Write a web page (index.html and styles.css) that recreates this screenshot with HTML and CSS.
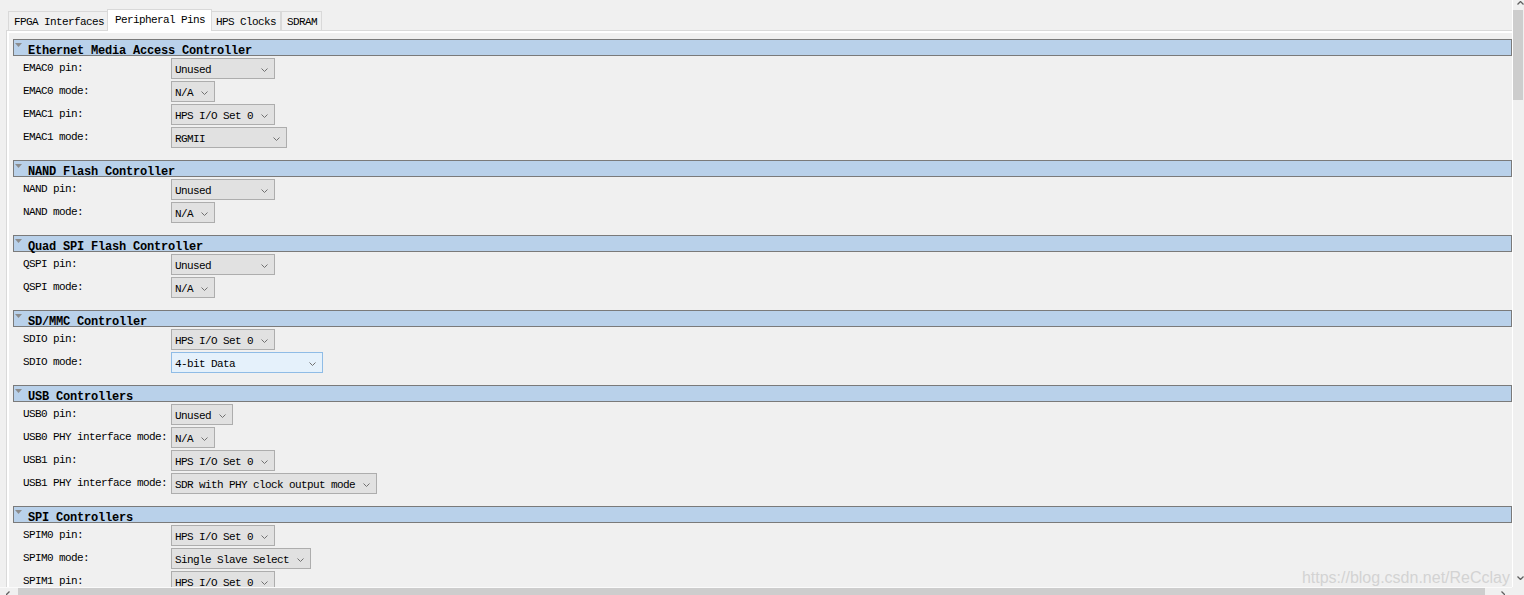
FILE: index.html
```html
<!DOCTYPE html>
<html lang="en">
<head>
    <meta charset="UTF-8">
    <title>HPS Peripheral Pins</title>
    <link rel="stylesheet" href="styles.css">
</head>
<body>

<div class="window">
    <div class="main">
        <div class="tabs">
            <div class="tab">FPGA Interfaces</div>
            <div class="tab active">Peripheral Pins</div>
            <div class="tab">HPS Clocks</div>
            <div class="tab">SDRAM</div>
        </div>

        <div class="panel">
            <div class="scroller">

                <div class="group">
                    <div class="group-head">
                        <svg class="caret" width="7" height="4" viewBox="0 0 7 4"><polygon points="0,0 7,0 3.5,4"/></svg>
                        <span class="title">Ethernet Media Access Controller</span>
                    </div>
                    <div class="fields">
                        <label>EMAC0 pin:</label>
                        <div class="combo w104"><span>Unused</span><svg class="chev" width="7" height="4" viewBox="0 0 7 4"><polyline points="0.5,0.5 3.5,3.5 6.5,0.5"/></svg></div>
                        <label>EMAC0 mode:</label>
                        <div class="combo w44"><span>N/A</span><svg class="chev" width="7" height="4" viewBox="0 0 7 4"><polyline points="0.5,0.5 3.5,3.5 6.5,0.5"/></svg></div>
                        <label>EMAC1 pin:</label>
                        <div class="combo w104"><span>HPS I/O Set 0</span><svg class="chev" width="7" height="4" viewBox="0 0 7 4"><polyline points="0.5,0.5 3.5,3.5 6.5,0.5"/></svg></div>
                        <label>EMAC1 mode:</label>
                        <div class="combo w116"><span>RGMII</span><svg class="chev" width="7" height="4" viewBox="0 0 7 4"><polyline points="0.5,0.5 3.5,3.5 6.5,0.5"/></svg></div>
                    </div>
                </div>

                <div class="group">
                    <div class="group-head">
                        <svg class="caret" width="7" height="4" viewBox="0 0 7 4"><polygon points="0,0 7,0 3.5,4"/></svg>
                        <span class="title">NAND Flash Controller</span>
                    </div>
                    <div class="fields">
                        <label>NAND pin:</label>
                        <div class="combo w104"><span>Unused</span><svg class="chev" width="7" height="4" viewBox="0 0 7 4"><polyline points="0.5,0.5 3.5,3.5 6.5,0.5"/></svg></div>
                        <label>NAND mode:</label>
                        <div class="combo w44"><span>N/A</span><svg class="chev" width="7" height="4" viewBox="0 0 7 4"><polyline points="0.5,0.5 3.5,3.5 6.5,0.5"/></svg></div>
                    </div>
                </div>

                <div class="group">
                    <div class="group-head">
                        <svg class="caret" width="7" height="4" viewBox="0 0 7 4"><polygon points="0,0 7,0 3.5,4"/></svg>
                        <span class="title">Quad SPI Flash Controller</span>
                    </div>
                    <div class="fields">
                        <label>QSPI pin:</label>
                        <div class="combo w104"><span>Unused</span><svg class="chev" width="7" height="4" viewBox="0 0 7 4"><polyline points="0.5,0.5 3.5,3.5 6.5,0.5"/></svg></div>
                        <label>QSPI mode:</label>
                        <div class="combo w44"><span>N/A</span><svg class="chev" width="7" height="4" viewBox="0 0 7 4"><polyline points="0.5,0.5 3.5,3.5 6.5,0.5"/></svg></div>
                    </div>
                </div>

                <div class="group">
                    <div class="group-head">
                        <svg class="caret" width="7" height="4" viewBox="0 0 7 4"><polygon points="0,0 7,0 3.5,4"/></svg>
                        <span class="title">SD/MMC Controller</span>
                    </div>
                    <div class="fields">
                        <label>SDIO pin:</label>
                        <div class="combo w104"><span>HPS I/O Set 0</span><svg class="chev" width="7" height="4" viewBox="0 0 7 4"><polyline points="0.5,0.5 3.5,3.5 6.5,0.5"/></svg></div>
                        <label>SDIO mode:</label>
                        <div class="combo w152 hover"><span>4-bit Data</span><svg class="chev" width="7" height="4" viewBox="0 0 7 4"><polyline points="0.5,0.5 3.5,3.5 6.5,0.5"/></svg></div>
                    </div>
                </div>

                <div class="group">
                    <div class="group-head">
                        <svg class="caret" width="7" height="4" viewBox="0 0 7 4"><polygon points="0,0 7,0 3.5,4"/></svg>
                        <span class="title">USB Controllers</span>
                    </div>
                    <div class="fields">
                        <label>USB0 pin:</label>
                        <div class="combo w62"><span>Unused</span><svg class="chev" width="7" height="4" viewBox="0 0 7 4"><polyline points="0.5,0.5 3.5,3.5 6.5,0.5"/></svg></div>
                        <label>USB0 PHY interface mode:</label>
                        <div class="combo w44"><span>N/A</span><svg class="chev" width="7" height="4" viewBox="0 0 7 4"><polyline points="0.5,0.5 3.5,3.5 6.5,0.5"/></svg></div>
                        <label>USB1 pin:</label>
                        <div class="combo w104"><span>HPS I/O Set 0</span><svg class="chev" width="7" height="4" viewBox="0 0 7 4"><polyline points="0.5,0.5 3.5,3.5 6.5,0.5"/></svg></div>
                        <label>USB1 PHY interface mode:</label>
                        <div class="combo w206"><span>SDR with PHY clock output mode</span><svg class="chev" width="7" height="4" viewBox="0 0 7 4"><polyline points="0.5,0.5 3.5,3.5 6.5,0.5"/></svg></div>
                    </div>
                </div>

                <div class="group">
                    <div class="group-head">
                        <svg class="caret" width="7" height="4" viewBox="0 0 7 4"><polygon points="0,0 7,0 3.5,4"/></svg>
                        <span class="title">SPI Controllers</span>
                    </div>
                    <div class="fields">
                        <label>SPIM0 pin:</label>
                        <div class="combo w104"><span>HPS I/O Set 0</span><svg class="chev" width="7" height="4" viewBox="0 0 7 4"><polyline points="0.5,0.5 3.5,3.5 6.5,0.5"/></svg></div>
                        <label>SPIM0 mode:</label>
                        <div class="combo w140"><span>Single Slave Select</span><svg class="chev" width="7" height="4" viewBox="0 0 7 4"><polyline points="0.5,0.5 3.5,3.5 6.5,0.5"/></svg></div>
                        <label>SPIM1 pin:</label>
                        <div class="combo w104"><span>HPS I/O Set 0</span><svg class="chev" width="7" height="4" viewBox="0 0 7 4"><polyline points="0.5,0.5 3.5,3.5 6.5,0.5"/></svg></div>
                    </div>
                </div>

            </div>
        </div>
    </div>

    <div class="vscroll">
        <svg class="arrow-up" width="7" height="4" viewBox="0 0 7 4"><polyline points="0.5,3.5 3.5,0.5 6.5,3.5"/></svg>
        <div class="vthumb"></div>
        <svg class="arrow-down" width="7" height="4" viewBox="0 0 7 4"><polyline points="0.5,0.5 3.5,3.5 6.5,0.5"/></svg>
    </div>

    <div class="hscroll">
        <svg class="arrow-left" width="4" height="7" viewBox="0 0 4 7"><polyline points="3.5,0.5 0.5,3.5 3.5,6.5"/></svg>
        <div class="hthumb"></div>
        <svg class="arrow-right" width="4" height="7" viewBox="0 0 4 7"><polyline points="0.5,0.5 3.5,3.5 0.5,6.5"/></svg>
    </div>
    <div class="corner"></div>

    <div class="watermark">https://blog.csdn.net/ReCclay</div>
</div>

</body>
</html>
```

FILE: styles.css
```css
body {
    margin: 0;
    background-color: #f0f0f0;
    color: #000;
    font-family: "Liberation Mono", monospace;
    font-size: 11px;
    letter-spacing: -0.6px;
    overflow: hidden;
}
.window {
    position: relative;
    display: grid;
    grid-template-columns: 1512px 12px;
    grid-template-rows: 587px 8px;
    height: 595px;
}
.main {
    overflow: hidden;
}

/* tab strip */
.tabs {
    position: relative;
    z-index: 1;
    display: flex;
    align-items: flex-end;
    height: 22px;
    margin-top: 9px;
    margin-bottom: -1px;
    padding-left: 8px;
}
.tab {
    height: 15px;
    line-height: 15px;
    padding: 3px 4px 0 5px;
    border: 1px solid #d9d9d9;
    background-color: #f0f0f0;
    white-space: nowrap;
}
.tab.active {
    position: relative;
    z-index: 1;
    margin: 0 -2px;
    padding: 3px 6px 3px 7px;
    border-bottom: none;
    background-color: #fff;
}
.panel {
    margin-left: 6px;
    padding: 2px 0 0 2px;
    border-top: 1px solid #d9d9d9;
    border-left: 1px solid #d9d9d9;
    background-color: #fff;
}
.scroller {
    padding: 6px 0 0 4px;
    background-color: #f0f0f0;
}

/* collapsible groups */
.group {
    margin-bottom: 12px;
}
.group-head {
    display: flex;
    align-items: flex-start;
    height: 15px;
    padding-left: 1px;
    border: 1px solid #7a7a7a;
    background-color: #b9d1ea;
}
.caret {
    margin: 3px 6px 0 0;
    fill: #8c8c8c;
}
.title {
    margin-top: 5px;
    font-size: 12px;
    font-weight: bold;
    letter-spacing: -0.2px;
    line-height: 12px;
    white-space: nowrap;
}
.fields {
    display: grid;
    grid-template-columns: 148px auto;
    grid-auto-rows: 21px;
    row-gap: 2px;
    justify-items: start;
    margin: 2px 0 0 10px;
}
.fields label {
    line-height: 21px;
    white-space: nowrap;
}

/* combo boxes */
.combo {
    box-sizing: border-box;
    display: flex;
    align-items: center;
    justify-content: space-between;
    height: 21px;
    padding: 0 6px 0 3px;
    border: 1px solid #adadad;
    background-color: #e1e1e1;
    white-space: nowrap;
}
.combo span {
    padding-top: 3px;
    line-height: 16px;
}
.combo.hover {
    border-color: #8fbce6;
    background-color: #e5f1fb;
}
.chev {
    flex-shrink: 0;
    margin-top: 2px;
    fill: none;
    stroke: #707070;
    stroke-width: 1;
}
.w44 { width: 44px; }
.w62 { width: 62px; }
.w104 { width: 104px; }
.w116 { width: 116px; }
.w140 { width: 140px; }
.w152 { width: 152px; }
.w206 { width: 206px; }

/* scroll bars */
.vscroll {
    display: flex;
    flex-direction: column;
    border-left: 1px solid #fff;
    background-color: #f0f0f0;
}
.vthumb {
    width: 10px;
    height: 90px;
    background-color: #cdcdcd;
}
.arrow-up, .arrow-down, .arrow-left, .arrow-right {
    flex-shrink: 0;
    fill: none;
    stroke: #606060;
    stroke-width: 1.3;
}
.arrow-up {
    margin: 1px 0 5px 4px;
}
.arrow-down {
    margin: auto 0 7px 4px;
}
.hscroll {
    display: flex;
    align-items: flex-start;
    overflow: hidden;
    border-top: 1px solid #fafafa;
    background-color: #f0f0f0;
}
.arrow-left {
    margin: 3px 8px 0 6px;
}
.hthumb {
    width: 1467px;
    height: 8px;
    background-color: #cdcdcd;
}
.arrow-right {
    margin: 3px 0 0 16px;
}
.corner {
    background-color: #f0f0f0;
}

.watermark {
    position: absolute;
    top: 570px;
    right: 14px;
    z-index: 2;
    font-family: "Liberation Sans", Arial, sans-serif;
    font-size: 16px;
    letter-spacing: 0;
    line-height: 16px;
    color: #d3d3d3;
}
```
